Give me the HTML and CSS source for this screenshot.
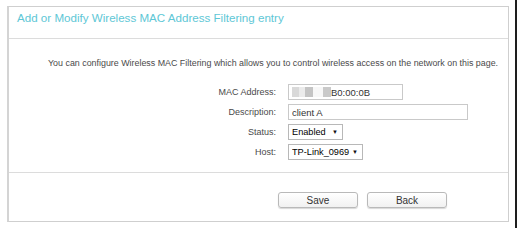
FILE: index.html
```html
<!DOCTYPE html>
<html lang="en">

<head>
    <meta charset="UTF-8">
    <meta name="viewport" content="width=device-width, initial-scale=1.0">
    <title>Wireless MAC Filtering</title>
    <link rel="stylesheet" href="styles.css">
</head>

<body>
    <div class="page">
        <div class="panel">
            <div class="panel-header">
                <h1 class="title">Add or Modify Wireless MAC Address Filtering entry</h1>
            </div>

            <div class="panel-body">
                <p class="intro">You can configure Wireless MAC Filtering which allows you to control wireless access on the network on this page.</p>

                <div class="form-grid">
                    <label class="form-label">MAC Address:</label>
                    <div class="text-field mac-field">
                        <span class="blur">
                            <span class="px px-a"></span>
                            <span class="px px-b"></span>
                            <span class="px px-c"></span>
                            <span class="px px-d"></span>
                            <span class="px px-e"></span>
                        </span>
                        <span>B0:00:0B</span>
                    </div>

                    <label class="form-label">Description:</label>
                    <input class="text-field desc-field" type="text" value="client A">

                    <label class="form-label">Status:</label>
                    <div class="select-box status-box">
                        <select class="select">
                            <option>Enabled</option>
                            <option>Disabled</option>
                        </select>
                        <span class="caret">▼</span>
                    </div>

                    <label class="form-label">Host:</label>
                    <div class="select-box host-box">
                        <select class="select">
                            <option>TP-Link_0969</option>
                        </select>
                        <span class="caret">▼</span>
                    </div>
                </div>
            </div>

            <div class="panel-footer">
                <button class="btn">Save</button>
                <button class="btn">Back</button>
            </div>
        </div>
    </div>
</body>

</html>
```

FILE: styles.css
```css
* {
    box-sizing: border-box;
}

body {
    margin: 0;
    background-color: #ffffff;
    font-family: "Liberation Sans", Arial, sans-serif;
}

.page {
    width: 517px;
    height: 228px;
    padding: 6px 0 0 7px;
    border-right: 2px solid #1e1e1e;
}

.panel {
    width: 502px;
    height: 216px;
    border: 1px solid #cfcfcf;
    border-left: 2px solid #d4d4d4;
    display: flex;
    flex-direction: column;
}

.panel-header {
    height: 32px;
    padding: 4px 8px 0;
    border-bottom: 1px solid #dcdcdc;
}

.title {
    margin: 0;
    font-size: 11.6px;
    line-height: 14px;
    font-weight: normal;
    color: #5ec7d6;
}

.panel-body {
    padding: 18px 0 12px;
    border-bottom: 1px solid #dcdcdc;
}

.intro {
    margin: 0 0 0 39px;
    font-size: 8.88px;
    line-height: 12px;
    color: #4a4a4a;
}

.form-grid {
    margin-top: 15px;
    display: grid;
    grid-template-columns: 267px auto;
    column-gap: 12px;
    row-gap: 4px;
    justify-items: start;
    align-items: center;
}

.form-label {
    justify-self: end;
    font-size: 9px;
    color: #4a4a4a;
}

.text-field {
    height: 16px;
    border: 1px solid #c9c9c9;
    padding: 0 3px;
    font-family: inherit;
    font-size: 9.5px;
    color: #333333;
    background-color: #ffffff;
    outline: none;
}

.mac-field {
    width: 115px;
    display: flex;
    align-items: center;
}

.desc-field {
    width: 180px;
}

.blur {
    display: flex;
    width: 39px;
    height: 10px;
}

.px {
    height: 100%;
}

.px-a {
    width: 7px;
    background-color: #d9d9d9;
}

.px-b {
    width: 6px;
    background-color: #ebebeb;
}

.px-c {
    width: 8px;
    background-color: #c4c4c4;
}

.px-d {
    width: 10px;
    background-color: #f7f7f7;
}

.px-e {
    width: 8px;
    background-color: #c9c9c9;
}

.select-box {
    height: 16px;
    border: 1px solid #b8b8b8;
    display: flex;
    align-items: center;
    padding-right: 4px;
    background-color: #ffffff;
}

.status-box {
    width: 55px;
}

.host-box {
    width: 75px;
}

.select {
    flex: 1;
    min-width: 0;
    appearance: none;
    -webkit-appearance: none;
    border: none;
    background: transparent;
    padding: 0 0 0 3px;
    font-family: inherit;
    font-size: 9.2px;
    color: #000000;
    outline: none;
}

.caret {
    font-size: 6px;
    color: #111111;
}

.panel-footer {
    flex: 1;
    display: flex;
    gap: 9px;
    padding: 19px 0 0 269px;
}

.btn {
    width: 80px;
    height: 16px;
    padding: 0;
    border: 1px solid #b9b9b9;
    border-radius: 3px;
    background: linear-gradient(#ffffff, #f1f1f1);
    box-shadow: 0 1px 1px #d8d8d8;
    font-family: inherit;
    font-size: 10px;
    color: #333333;
    cursor: pointer;
}
```
